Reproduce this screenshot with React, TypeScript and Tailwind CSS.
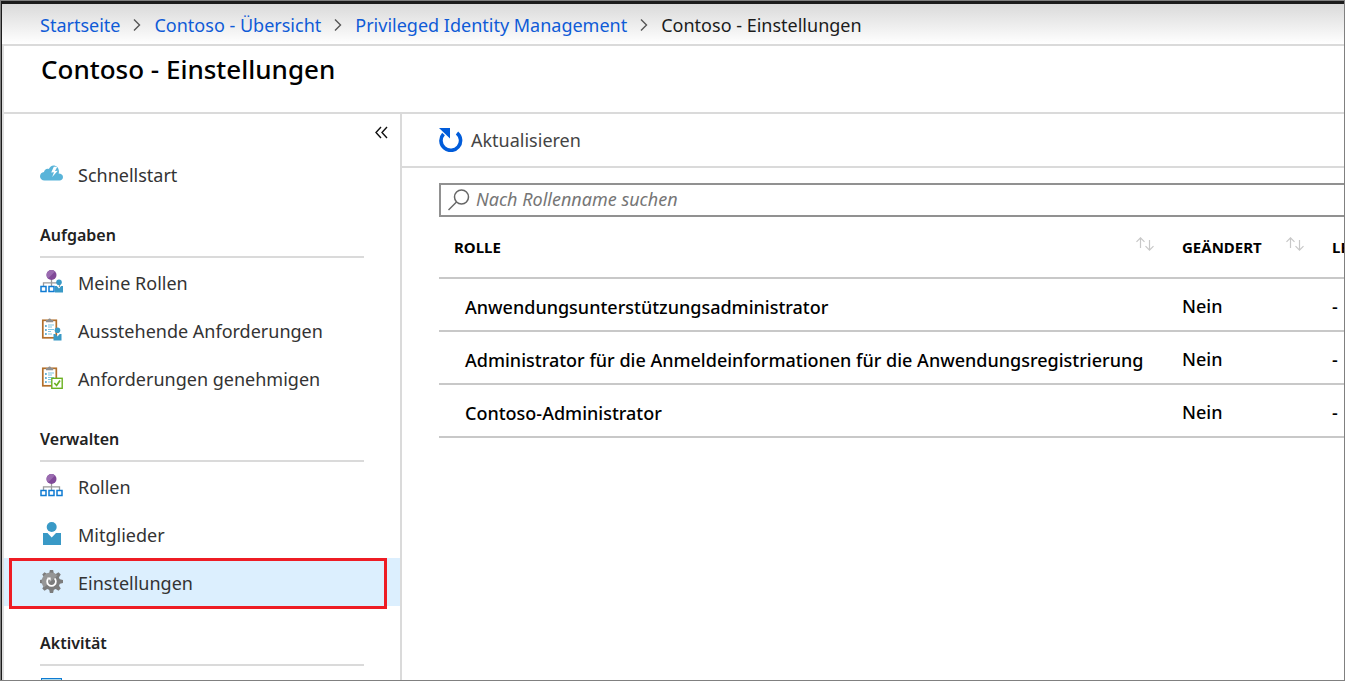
import type { ReactNode } from 'react';

function CloudIcon() {
  return (
    <svg width="24" height="24" viewBox="0 0 24 24" aria-hidden="true">
      <path
        d="M4.500 18.500C2 18.500 0 16.600 0 14.200c0-2.300 1.800-4.200 4-4.300C4.300 8 5.800 6.700 7.600 6.700c.4 0 .8.100 1.200.2C9.700 5.200 11.500 3.500 13.500 3.500c2.900 0 5.200 2.200 5.400 5.500.1.900 0 1.800-.3 2.600 2.500 0 4.400 1.500 4.400 3.500s-1.500 3.400-3.400 3.400z"
        fill="#59b4d9"
      />
      <path d="M13.800 4.800 11.200 10.600l2.800-.3-1.800 4.700 5.600-6.300-2.800.2 2.300-4.200z" fill="#fff" />
    </svg>
  );
}

function Person({ x, y }: { x: number; y: number }) {
  return (
    <g transform={`translate(${x} ${y})`}>
      <circle cx="4" cy="2.800" r="2.800" fill="#3999c6" />
      <path d="M0 6.500h1.800L4 9l2.200-2.500H8V13H0z" fill="#3999c6" />
    </g>
  );
}

function RolesIcon({ person = false }: { person?: boolean }) {
  return (
    <svg width="24" height="24" viewBox="0 0 24 24" aria-hidden="true">
      <path d="M11.500 9v8M3.500 17v-4.200h16V17" fill="none" stroke="#9a9a9a" strokeWidth="1.300" />
      <circle cx="11.500" cy="5" r="5" fill="#804998" />
      <path d="M8 8.600A5 5 0 0 1 15 1.400z" fill="#9a6bb0" />
      <g fill="#fff" stroke="#0f7bd2" strokeWidth="1.500">
        <rect x="1" y="16.500" width="5" height="5" />
        <rect x="9" y="16.500" width="5" height="5" />
        {!person && <rect x="17" y="16.500" width="5" height="5" />}
      </g>
      {person && <Person x={15} y={9.500} />}
    </svg>
  );
}

function ClipboardIcon({ check = false }: { check?: boolean }) {
  return (
    <svg width="24" height="24" viewBox="0 0 24 24" aria-hidden="true">
      <rect x="2.800" y="2.300" width="13.500" height="17.500" fill="#fff" stroke="#b26f2b" strokeWidth="1.700" />
      <path d="M6 4.300V2h2c.2-1 .8-1.500 1.600-1.500S11 1 11.200 2h2v2.300z" fill="#8f8f8f" />
      <path d="M5 8h1.800M5 12h1.800M5 16h1.800" stroke="#3999c6" strokeWidth="1.400" />
      <path d="M8 7h6M8 9h4M8 11.500h6M8 13.500h3M8 16h4" stroke="#7fc4df" strokeWidth="1.100" />
      {check ? (
        <>
          <rect x="11.800" y="12.300" width="10.400" height="10" fill="#fff" stroke="#6bb120" strokeWidth="1.400" />
          <path d="m14.300 17 2.300 2.500 3.400-5" fill="none" stroke="#6bb120" strokeWidth="1.700" />
        </>
      ) : (
        <Person x={13.500} y={9.500} />
      )}
    </svg>
  );
}

function MemberIcon() {
  return (
    <svg width="24" height="24" viewBox="0 0 24 24" aria-hidden="true">
      <circle cx="11.700" cy="5" r="5" fill="#3999c6" />
      <path d="M3 11h4.500l4.200 4.500L16 11h5v12H3z" fill="#3999c6" />
    </svg>
  );
}

const TEETH = [0, 45, 90, 135, 180, 225, 270, 315];

function GearIcon() {
  return (
    <svg width="24" height="24" viewBox="0 0 24 24" aria-hidden="true">
      <g fill="#7c7c7c">
        {TEETH.map((angle) => (
          <path key={angle} d="M8.800 5 9.900 0h3.200l1.100 5z" transform={`rotate(${angle} 11.500 11.500)`} />
        ))}
        <circle cx="11.500" cy="11.500" r="8.600" />
      </g>
      <path d="M4 17.500A8.600 8.600 0 0 1 17.500 5.500z" fill="#969696" />
      <path d="M8.400 8.400a4.400 4.400 0 1 0 6.200 0" fill="none" stroke="#fff" strokeWidth="1.700" />
      <path d="M7.200 7.400h3.400v3.300z" fill="#fff" />
    </svg>
  );
}

function LogIcon() {
  return (
    <svg width="24" height="24" viewBox="0 0 24 24" aria-hidden="true">
      <rect x="1.500" y=".500" width="20" height="20" fill="#a9d9ee" stroke="#0f7bd2" strokeWidth="1" />
    </svg>
  );
}

function Chevron() {
  return (
    <svg width="8" height="14" viewBox="0 0 8 14" aria-hidden="true" className="shrink-0">
      <path d="m1 1.500 5.500 5.500L1 12.500" fill="none" stroke="#555" strokeWidth="1.400" />
    </svg>
  );
}

function SortIcon() {
  return (
    <svg width="18" height="20" viewBox="0 0 18 20" aria-hidden="true">
      <path d="M4.500 11V1M.5 4.800 4.500.8l4 4M13.500 3v10M9.500 9.200l4 4 4-4" fill="none" stroke="#c8c8c8" strokeWidth="1.200" />
    </svg>
  );
}

function NavItem({ icon, label, active = false }: { icon: ReactNode; label: string; active?: boolean }) {
  return (
    <li className="relative">
      <a
        href="#"
        aria-current={active ? 'page' : undefined}
        className={`flex h-12 items-center gap-[14px] pl-9 text-lg text-[#333] ${active ? 'bg-[#dceffe]' : ''}`}
      >
        {icon}
        <span className="pt-0.5">{label}</span>
      </a>
      {active && <span className="pointer-events-none absolute -bottom-[3px] left-[5px] right-[13px] top-0 border-3 border-[#ee1c24]" />}
    </li>
  );
}

function NavGroup({ title, children }: { title: string; children: ReactNode }) {
  return (
    <section>
      <h2 className="ml-9 mr-9 flex h-[60px] items-center border-b-2 border-[#dadada] pt-4 text-base font-semibold text-[#222]">
        {title}
      </h2>
      <ul>{children}</ul>
    </section>
  );
}

const ROLES = [
  'Anwendungsunterstützungsadministrator',
  'Administrator für die Anmeldeinformationen für die Anwendungsregistrierung',
  'Contoso-Administrator',
];

export default function App() {
  return (
    <div className="flex h-screen flex-col overflow-hidden border border-[#808080] bg-white font-['Noto_Sans','Open_Sans',sans-serif] text-black">
      <div className="flex min-h-0 flex-1 flex-col border-l border-t-3 border-[#1b1b1b]">
        <nav
          aria-label="Breadcrumb"
          className="flex h-[42px] shrink-0 items-center gap-[13px] whitespace-nowrap border-b-2 border-[#dadada] bg-linear-to-b from-[#dadada] to-white pl-[38px] pt-0.5 text-lg text-[#0f5bd7]"
        >
          <a href="#">Startseite</a>
          <Chevron />
          <a href="#">Contoso - Übersicht</a>
          <Chevron />
          <a href="#">Privileged Identity Management</a>
          <Chevron />
          <span className="text-[#1c1c1c]">Contoso - Einstellungen</span>
        </nav>
        <div className="flex min-h-0 flex-1 flex-col border-l-2 border-[#dedede]">
          <header className="h-[68px] shrink-0 border-b-2 border-[#dadada] pl-[37px] pt-[5px]">
            <h1 className="text-[26px] font-medium leading-9">Contoso - Einstellungen</h1>
          </header>
          <div className="flex min-h-0 flex-1">
            <aside className="w-[398px] shrink-0 overflow-hidden border-r-2 border-[#dadada]">
              <div className="flex h-9 items-center justify-end pr-3">
                <button type="button" aria-label="«" className="flex">
                  <svg width="13" height="13" viewBox="0 0 13 13" aria-hidden="true">
                    <path d="M6 1 1 6.500 6 12M12 1 7 6.500l5 5.500" fill="none" stroke="#111" strokeWidth="1.400" />
                  </svg>
                </button>
              </div>
              <ul>
                <NavItem icon={<CloudIcon />} label="Schnellstart" />
              </ul>
              <NavGroup title="Aufgaben">
                <NavItem icon={<RolesIcon person />} label="Meine Rollen" />
                <NavItem icon={<ClipboardIcon />} label="Ausstehende Anforderungen" />
                <NavItem icon={<ClipboardIcon check />} label="Anforderungen genehmigen" />
              </NavGroup>
              <NavGroup title="Verwalten">
                <NavItem icon={<RolesIcon />} label="Rollen" />
                <NavItem icon={<MemberIcon />} label="Mitglieder" />
                <NavItem icon={<GearIcon />} label="Einstellungen" active />
              </NavGroup>
              <NavGroup title="Aktivität">
                <NavItem icon={<LogIcon />} label="" />
              </NavGroup>
            </aside>
            <main className="min-w-0 flex-1">
              <div className="flex h-[54px] items-center border-b-2 border-[#dadada] pl-[37px]">
                <button type="button" className="flex items-center gap-2 text-lg text-[#444]">
                  <svg width="24" height="24" viewBox="0 0 24 24" aria-hidden="true">
                    <path d="M4.500 6A9.800 9.800 0 1 0 18 5" fill="none" stroke="#015cda" strokeWidth="3.600" />
                    <path d="M0 0h11v10.500z" fill="#015cda" />
                  </svg>
                  Aktualisieren
                </button>
              </div>
              <div className="pl-[37px] pt-[15px]">
                <label className="flex h-[34px] items-center gap-1.5 border-2 border-r-0 border-[#919191] pl-[7px]">
                  <svg width="22" height="22" viewBox="0 0 22 22" aria-hidden="true" className="shrink-0">
                    <circle cx="13.500" cy="8" r="7" fill="none" stroke="#666" strokeWidth="1.500" />
                    <path d="M8.500 13 .5 21" stroke="#666" strokeWidth="1.500" />
                  </svg>
                  <input
                    type="search"
                    aria-label="Nach Rollenname suchen"
                    placeholder="Nach Rollenname suchen"
                    className="min-w-0 flex-1 bg-transparent pb-0.5 text-lg italic leading-6 outline-none placeholder:text-[#767676]"
                  />
                </label>
                <table className="w-full table-fixed border-collapse text-left">
                  <colgroup>
                    <col />
                    <col className="w-[150px]" />
                    <col className="w-3" />
                  </colgroup>
                  <thead>
                    <tr className="h-[61px] border-b-2 border-[#c8c8c8] text-[15px]">
                      <th className="pl-[15px] font-bold">
                        <div className="flex items-center justify-between pr-7">
                          ROLLE
                          <SortIcon />
                        </div>
                      </th>
                      <th className="font-bold">
                        <div className="flex items-center justify-between pr-7">
                          GEÄNDERT
                          <SortIcon />
                        </div>
                      </th>
                      <th className="overflow-hidden font-bold">LE</th>
                    </tr>
                  </thead>
                  <tbody>
                    {ROLES.map((role) => (
                      <tr key={role} className="h-[53px] whitespace-nowrap border-b-2 border-[#c8c8c8] text-lg font-medium">
                        <td className="pl-[26px] pt-1">{role}</td>
                        <td className="pt-0.5">Nein</td>
                        <td className="pt-0.5">-</td>
                      </tr>
                    ))}
                  </tbody>
                </table>
              </div>
            </main>
          </div>
        </div>
      </div>
    </div>
  );
}
